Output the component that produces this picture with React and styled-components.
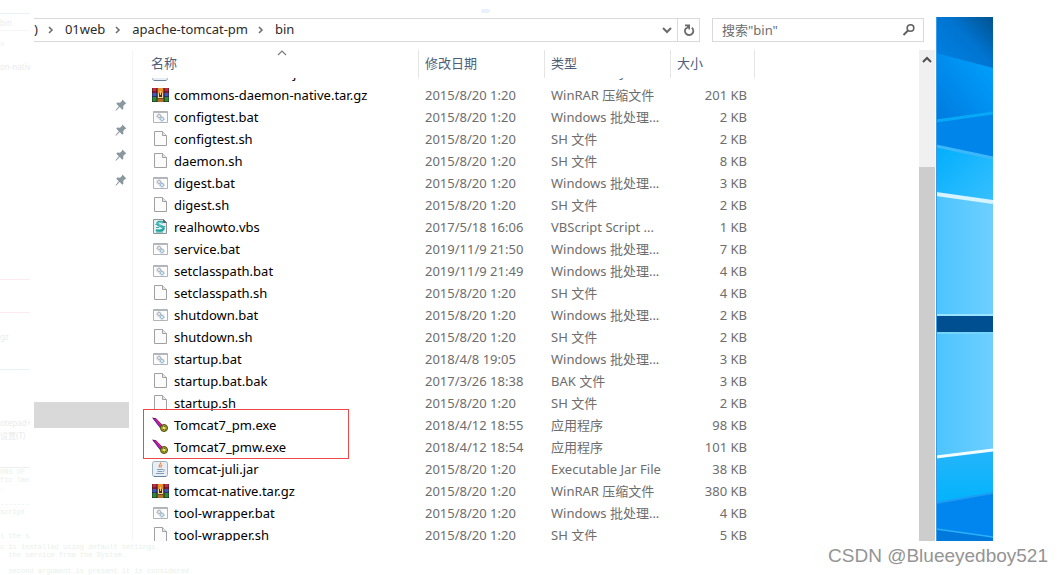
import { useLayoutEffect, useRef } from 'react';
import styled, { createGlobalStyle } from 'styled-components';

const GlobalStyle = createGlobalStyle`
  * {
    box-sizing: border-box;
  }

  body {
    margin: 0;
    background-color: #fff;
    font-family: 'Noto Sans', 'Noto Sans CJK SC', sans-serif;
    font-size: 13px;
  }
`;

const Page = styled.div`
  display: flex;
  flex-direction: column;
  height: 100vh;
  overflow: hidden;
`;

const Main = styled.div`
  display: flex;
  flex: 1;
  min-height: 0;
`;

const Ghost = styled.div`
  width: 34px;
  padding-right: 4px;
  flex-shrink: 0;
  overflow: hidden;
`;

const GhostLine = styled.div`
  height: ${(props) => props.$height}px;
  line-height: ${(props) => props.$height}px;
  border-bottom: 1px solid ${(props) => props.$rule || 'transparent'};
  color: #ebebeb;
  font-size: 8px;
  white-space: pre;
`;

const CodeLine = styled.div`
  height: 8px;
  line-height: 8px;
  font-family: 'Liberation Mono', monospace;
  font-size: 7px;
  color: #e9f0e9;
  white-space: pre;
`;

const Shot = styled.div`
  display: flex;
  flex-direction: column;
  flex: 1;
  min-width: 0;
  margin-right: 70px;
`;

const TopStrip = styled.div`
  display: flex;
  height: 17px;
  flex-shrink: 0;
  padding: 9px 0 0 447px;
`;

const Blob = styled.div`
  width: 9px;
  height: 4px;
  border-radius: 2px;
  background-color: #e9f1ff;
`;

const Screen = styled.div`
  display: flex;
  flex: 1;
  min-height: 0;
`;

const Explorer = styled.div`
  display: flex;
  flex-direction: column;
  flex: 1;
  min-width: 0;
`;

const Toolbar = styled.div`
  display: flex;
  gap: 12px;
  height: 33px;
  flex-shrink: 0;
  padding: 1px 12px 8px 0;
`;

const AddressBar = styled.nav`
  display: flex;
  align-items: center;
  flex: 1;
  min-width: 0;
  border: 1px solid #d9d9d9;
  border-left: none;
`;

const Crumbs = styled.div`
  display: flex;
  align-items: center;
  gap: 10px;
  flex: 1;
  min-width: 0;
  overflow: hidden;
  white-space: nowrap;
`;

const Crumb = styled.a`
  padding-bottom: 2px;
  color: #2b2b2b;
  text-decoration: none;
`;

const BarButton = styled.button`
  display: flex;
  align-items: center;
  justify-content: center;
  width: ${(props) => props.$width}px;
  height: 22px;
  padding: 0;
  border: none;
  border-left: 1px solid ${(props) => (props.$divided ? '#d9d9d9' : 'transparent')};
  background: none;
`;

const SearchBox = styled.label`
  display: flex;
  align-items: center;
  width: 212px;
  padding: 0 7px 0 9px;
  border: 1px solid #d9d9d9;
`;

const SearchInput = styled.input`
  flex: 1;
  min-width: 0;
  height: 20px;
  padding: 0;
  border: none;
  outline: none;
  background: none;
  font: inherit;

  &::placeholder {
    color: #6d6d6d;
    opacity: 1;
  }
`;

const Body = styled.div`
  display: flex;
  flex: 1;
  min-height: 0;
`;

const NavPane = styled.div`
  width: 99px;
  flex-shrink: 0;
  padding: 42px 3px 0 0;
  border-right: 1px solid #f5f5f5;
`;

const PinnedItem = styled.div`
  display: flex;
  align-items: center;
  justify-content: flex-end;
  height: 25px;
  padding-right: 2px;
`;

const SelectedItem = styled.div`
  height: 26px;
  margin-top: 210px;
  background-color: #d9d9d9;
`;

const FileList = styled.div`
  flex: 1;
  min-width: 0;
  padding-left: 12px;
  overflow: hidden;
`;

const Table = styled.table`
  width: 100%;
  table-layout: fixed;
  border-collapse: separate;
  border-spacing: 0;
`;

const HeadCell = styled.th`
  position: sticky;
  top: 0;
  z-index: 1;
  width: ${(props) => (props.$width ? `${props.$width}px` : 'auto')};
  height: 28px;
  padding: 0 6px 3px;
  border-right: 1px solid ${(props) => (props.$width ? '#e5e5e5' : 'transparent')};
  background-color: #fff;
  color: #4c607a;
  font-weight: 400;
  text-align: left;
`;

const SortArrow = styled.svg`
  position: absolute;
  top: 0;
  left: 50%;
  margin-left: -5px;
`;

const Cell = styled.td`
  position: relative;
  height: 22px;
  padding: 0 8px 0 6px;
  line-height: 22px;
  color: #6d6d6d;
  text-align: ${(props) => props.$align || 'left'};
  white-space: nowrap;
`;

const FileName = styled.div`
  display: flex;
  align-items: center;
  gap: 5px;
  padding-left: 1px;
  color: #000;

  svg {
    flex-shrink: 0;
  }
`;

const Highlight = styled.div`
  position: absolute;
  top: -5px;
  left: -2px;
  z-index: 1;
  width: 206px;
  height: 50px;
  border: 1px solid #f04848;
`;

const Scrollbar = styled.div`
  display: flex;
  flex-direction: column;
  width: 17px;
  flex-shrink: 0;
  padding-right: 1px;
`;

const ScrollButton = styled.button`
  display: flex;
  justify-content: center;
  height: 117px;
  padding: 6px 0 0;
  border: none;
  background-color: #f0f0f0;
`;

const ScrollThumb = styled.div`
  flex: 1;
  background-color: #cdcdcd;
`;

const Wallpaper = styled.div`
  width: 57px;
  flex-shrink: 0;

  svg {
    display: block;
    width: 100%;
    height: 100%;
  }
`;

const Footer = styled.div`
  display: flex;
  justify-content: space-between;
  height: 34px;
  flex-shrink: 0;
  padding: 2px 15px 0 0;
`;

const FooterCode = styled.div`
  display: flex;
  flex-direction: column;
`;

const Watermark = styled.div`
  font-family: 'Liberation Sans', sans-serif;
  font-size: 19px;
  line-height: 26px;
  color: #949494;
  white-space: nowrap;
`;

const Stroke = ({ d, width = 10, height = 10, color = '#6b6b6b', weight = 2 }) => (
  <svg width={width} height={height} viewBox={`0 0 ${width} ${height}`} fill="none">
    <path d={d} stroke={color} strokeWidth={weight} />
  </svg>
);

const CrumbArrow = () => <Stroke d="M1 2l3 3-3 3" width={7} color="#707070" weight={1.6} />;

const PinIcon = () => (
  <svg width="12" height="12" viewBox="0 0 12 12" fill="#8b979f">
    <path d="M7.4.6l4 4-1.3.5-1.9 1.9.2 2.7-1.2 1-2.5-2.6L1 11.7l-.6-.4 3.4-4.1-2.5-2.4 1-1.2 2.7.2 1.9-1.9z" />
  </svg>
);

const RarIcon = () => (
  <svg width="17" height="16" viewBox="0 0 17 16">
    <path fill="#c02c44" d="M0 1h17v4H0z" />
    <path fill="#8c1830" d="M0 4h17v2H0z" />
    <path fill="#4058c4" d="M0 6h17v3H0z" />
    <path fill="#283480" d="M0 9h17v1H0z" />
    <path fill="#2e8a3a" d="M0 10h17v4H0z" />
    <path fill="#1c5c28" d="M0 14h17v1H0z" />
    <path fill="#1a1208" opacity=".4" d="M0 1h1v14H0zM16 1h1v14h-1zM4 1h1v14H4zM12 1h1v14h-1z" />
    <path fill="#7c4420" d="M5 1h7v14H5z" />
    <path fill="#e8922c" d="M6 1h5v5H6z" />
    <path fill="#4c2c18" d="M6 6h5v5H6z" />
    <path fill="#f0d8a0" d="M6 6h1v5H6zM10 6h1v5h-1zM7 10h3v1H7z" />
    <path fill="#f8c878" d="M8 4h1v4H8z" />
    <path fill="#b4702c" d="M6 12h5v3H6z" />
  </svg>
);

const BatIcon = () => (
  <svg width="17" height="16" viewBox="0 0 17 16">
    <path fill="#fcfcfc" stroke="#b0b4b8" d="M1.5 2.5h14v11h-14z" />
    <path fill="#b4b8bc" d="M2 3h13v1H2z" />
    <g fill="none">
      <circle cx="7" cy="7" r="1.5" stroke="#a8b0b8" strokeWidth="1" />
      <circle cx="7" cy="7" r="2.4" stroke="#a8b0b8" strokeWidth=".8" strokeDasharray="1 .9" />
      <circle cx="10" cy="10" r="1.5" stroke="#94b4cc" strokeWidth="1" />
      <circle cx="10" cy="10" r="2.4" stroke="#94b4cc" strokeWidth=".8" strokeDasharray="1 .9" />
    </g>
  </svg>
);

const PageIcon = () => (
  <svg width="17" height="16" viewBox="0 0 17 16">
    <path fill="#fbfbfb" stroke="#a0a0a0" d="M2.5.5h8l4 4v10h-12z" />
    <path fill="#e8e8e8" stroke="#a0a0a0" d="M10.5.5v4h4" />
  </svg>
);

const VbsIcon = () => (
  <svg width="17" height="16" viewBox="0 0 17 16">
    <path fill="#e9eeee" stroke="#8c9494" d="M1.5.5h10l3 3v11h-13z" />
    <path fill="#5a6464" d="M11 0l4 4h-4z" />
    <path
      fill="none"
      stroke="#1fa4a4"
      strokeWidth="2.4"
      d="M11.5 3.5c-2-1-6-1-6 1.2 0 2.3 6 2 6 4.6 0 2.7-5 2.7-7.5 1.7"
    />
    <path fill="none" stroke="#8fe0e0" strokeWidth=".8" d="M10.5 3.5c-3-.6-5 0-4.8 1.3.5 1.700 5.300 2 5.300 4" />
    <path fill="none" stroke="#3aa8a8" d="M3.5 5.5h3M9 7.5h4M4 8.5h3M4 13h7" />
  </svg>
);

const ExeIcon = () => (
  <svg width="17" height="16" viewBox="0 0 17 16">
    <path fill="#5c1060" d="M0 .5l4 .7 7 7.300-3 2.500z" />
    <path fill="#f0207c" d="M2.200 1.500l2 .5 5.500 6-1.200 1z" />
    <path fill="#8828e0" d="M1 1.500l1.500.8L8.500 9l-.8.900z" />
    <circle cx="12" cy="11" r="3.500" fill="#a8a428" stroke="#4c4a14" />
    <path fill="none" stroke="#3c3a10" d="M10.500 9.500l3 3M13 9l-2 4" />
    <circle cx="12" cy="11" r="1.300" fill="#e8e478" />
  </svg>
);

const JarIcon = () => (
  <svg width="17" height="16" viewBox="0 0 17 16">
    <rect x=".5" y=".5" width="15" height="15" rx="2" fill="#e8eef3" stroke="#9cb0c0" />
    <path fill="#64829c" d="M2 15h12v1H2z" />
    <path fill="none" stroke="#e88848" strokeWidth="1.2" d="M8.5 1.5c1 2-2.6 2.6-1 5M10.3 4c-1.5.8-1.8 1.5-1 2.8" />
    <path fill="none" stroke="#7c9cb8" d="M5 8.5h6M5.5 10.5h5M4 12.5h8M11.5 8.5c1.5 0 1 1.8-.5 2" />
  </svg>
);

const icons = {
  rar: RarIcon,
  bat: BatIcon,
  vbs: VbsIcon,
  exe: ExeIcon,
  jar: JarIcon,
};

const types = {
  rar: 'WinRAR 压缩文件',
  bat: 'Windows 批处理...',
  sh: 'SH 文件',
  vbs: 'VBScript Script ...',
  bak: 'BAK 文件',
  exe: '应用程序',
  jar: 'Executable Jar File',
};

const files = [
  { name: 'commons-daemon.jar', date: '2015/8/20 1:20', kind: 'jar', size: 24 },
  { name: 'commons-daemon-native.tar.gz', date: '2015/8/20 1:20', kind: 'rar', size: 201 },
  { name: 'configtest.bat', date: '2015/8/20 1:20', kind: 'bat', size: 2 },
  { name: 'configtest.sh', date: '2015/8/20 1:20', kind: 'sh', size: 2 },
  { name: 'daemon.sh', date: '2015/8/20 1:20', kind: 'sh', size: 8 },
  { name: 'digest.bat', date: '2015/8/20 1:20', kind: 'bat', size: 3 },
  { name: 'digest.sh', date: '2015/8/20 1:20', kind: 'sh', size: 2 },
  { name: 'realhowto.vbs', date: '2017/5/18 16:06', kind: 'vbs', size: 1 },
  { name: 'service.bat', date: '2019/11/9 21:50', kind: 'bat', size: 7 },
  { name: 'setclasspath.bat', date: '2019/11/9 21:49', kind: 'bat', size: 4 },
  { name: 'setclasspath.sh', date: '2015/8/20 1:20', kind: 'sh', size: 4 },
  { name: 'shutdown.bat', date: '2015/8/20 1:20', kind: 'bat', size: 2 },
  { name: 'shutdown.sh', date: '2015/8/20 1:20', kind: 'sh', size: 2 },
  { name: 'startup.bat', date: '2018/4/8 19:05', kind: 'bat', size: 3 },
  { name: 'startup.bat.bak', date: '2017/3/26 18:38', kind: 'bak', size: 3 },
  { name: 'startup.sh', date: '2015/8/20 1:20', kind: 'sh', size: 2 },
  { name: 'Tomcat7_pm.exe', date: '2018/4/12 18:55', kind: 'exe', size: 98, marked: true },
  { name: 'Tomcat7_pmw.exe', date: '2018/4/12 18:54', kind: 'exe', size: 101 },
  { name: 'tomcat-juli.jar', date: '2015/8/20 1:20', kind: 'jar', size: 38 },
  { name: 'tomcat-native.tar.gz', date: '2015/8/20 1:20', kind: 'rar', size: 380 },
  { name: 'tool-wrapper.bat', date: '2015/8/20 1:20', kind: 'bat', size: 4 },
  { name: 'tool-wrapper.sh', date: '2015/8/20 1:20', kind: 'sh', size: 5 },
];

const ghostLines = [
  { height: 14, rule: '#e6f1f8' },
  { height: 17, text: 'bin', rule: '#f6f6f6' },
  { height: 27, text: '^' },
  { height: 18, text: 'on-nativ' },
  { height: 204, rule: '#fdeaee' },
  { height: 33, rule: '#fdeaee' },
  { height: 48, text: 'gz' },
  { height: 9, rule: '#e6f1f8' },
  { height: 47 },
  { height: 12, text: 'otepad+' },
  { height: 14, text: '设置(T)' },
  { height: 25, rule: '#eeeeee' },
];

const codeLines = ['ONS OF', 'fic lan', '.', '', '-------', 'script', '', '', 'l the s'];

const FileRow = ({ file }) => {
  const Icon = icons[file.kind] || PageIcon;

  return (
    <tr>
      <Cell>
        <FileName>
          <Icon />
          {file.name}
        </FileName>
        {file.marked && <Highlight />}
      </Cell>
      <Cell>{file.date}</Cell>
      <Cell>{types[file.kind]}</Cell>
      <Cell $align="right">{file.size} KB</Cell>
      <Cell />
    </tr>
  );
};

const DesktopArt = () => (
  <svg viewBox="0 0 57 524" preserveAspectRatio="none">
    <defs>
      <linearGradient id="sky" x1="0" y1="1" x2="1" y2="0">
        <stop offset="0" stopColor="#0084e8" />
        <stop offset=".6" stopColor="#0074d0" />
        <stop offset="1" stopColor="#00528f" />
      </linearGradient>
      <linearGradient id="beam" x1="0" y1="1" x2="1" y2="0">
        <stop offset="0" stopColor="#0078dc" />
        <stop offset="1" stopColor="#00a2ff" />
      </linearGradient>
      <linearGradient id="cyan" x1="0" y1="0" x2="1" y2="1">
        <stop offset="0" stopColor="#00aefc" />
        <stop offset="1" stopColor="#38c0ff" />
      </linearGradient>
      <linearGradient id="pane" x1="0" y1="0" x2="1" y2="0">
        <stop offset="0" stopColor="#4cc4ff" />
        <stop offset="1" stopColor="#6ecfff" />
      </linearGradient>
      <linearGradient id="low" x1="0" y1="0" x2="0" y2="1">
        <stop offset="0" stopColor="#26b4fb" />
        <stop offset="1" stopColor="#00b4fc" />
      </linearGradient>
    </defs>
    <path fill="url(#sky)" d="M0 0h57v60H0z" />
    <path fill="url(#beam)" d="M0 36l57 15v60H0z" />
    <path fill="#0086ea" d="M0 104l57-8v50H0z" />
    <path stroke="#08a8f8" strokeWidth="3" d="M0 104l57-8" />
    <path fill="url(#cyan)" d="M0 128l57 12v46H0z" />
    <path stroke="#3cb8fa" strokeWidth="3" d="M0 129l57 12" />
    <path fill="url(#pane)" d="M0 177l57 8v115H0z" />
    <path stroke="#d8f4ff" strokeWidth="4" d="M0 177l57 8" />
    <path fill="#9be4ff" d="M0 297h57v2H0z" />
    <path fill="#004f90" d="M0 299h57v16H0z" />
    <path fill="url(#pane)" d="M0 315h57v118L0 440z" />
    <path fill="#74d4fa" d="M0 315h57v2H0z" />
    <path fill="url(#low)" d="M0 440l57-7v46L0 488z" />
    <path stroke="#f2fcff" strokeWidth="3" d="M0 440l57-7" />
    <path fill="#0086ee" d="M0 486l57-10v48H0z" />
    <path stroke="#1c9cf4" strokeWidth="2" d="M0 486l57-10" />
    <path fill="#0078dc" d="M0 512l57 8v4H0z" />
    <path stroke="#2cb0f8" strokeWidth="1.5" d="M0 512l57 8" />
    <path fill="#3c9ce8" d="M0 0h1v524H0z" />
  </svg>
);

const App = () => {
  const listRef = useRef(null);

  // the list is scrolled so the first row is mostly hidden under the header
  useLayoutEffect(() => {
    listRef.current.scrollTop = 16;
  }, []);

  return (
    <Page>
      <GlobalStyle />
      <Main>
        <Ghost aria-hidden="true">
          {ghostLines.map((line, index) => (
            <GhostLine key={index} $height={line.height} $rule={line.rule}>
              {line.text}
            </GhostLine>
          ))}
          {codeLines.map((line, index) => (
            <CodeLine key={index}>{line}</CodeLine>
          ))}
        </Ghost>
        <Shot>
          <TopStrip>
            <Blob />
          </TopStrip>
          <Screen>
            <Explorer>
              <Toolbar>
                <AddressBar>
                  <Crumbs>
                    <Crumb href="#drive">)</Crumb>
                    <CrumbArrow />
                    <Crumb href="#01web">01web</Crumb>
                    <CrumbArrow />
                    <Crumb href="#apache-tomcat-pm">apache-tomcat-pm</Crumb>
                    <CrumbArrow />
                    <Crumb href="#bin">bin</Crumb>
                  </Crumbs>
                  <BarButton $width={22} aria-label="History">
                    <Stroke d="M1 3l4 4 4-4" />
                  </BarButton>
                  <BarButton $width={22} $divided aria-label="Refresh">
                    <svg width="12" height="13" viewBox="0 0 12 13" fill="none" stroke="#6b6b6b">
                      <path strokeWidth="1.8" d="M8.8 3.6a4.2 4.2 0 1 1-5.8.4" />
                      <path strokeWidth="1.6" d="M2 1.4h4.2v4.2M6 1.6L3 5" />
                    </svg>
                  </BarButton>
                </AddressBar>
                <SearchBox>
                  <SearchInput type="text" placeholder={'搜索"bin"'} aria-label="搜索" />
                  <svg width="14" height="14" viewBox="0 0 14 14" fill="none" stroke="#606060">
                    <circle cx="8.5" cy="5" r="3.3" strokeWidth="1.6" />
                    <path strokeWidth="2" d="M6 7.5L1.5 12" />
                  </svg>
                </SearchBox>
              </Toolbar>
              <Body>
                <NavPane>
                  {[1, 2, 3, 4].map((item) => (
                    <PinnedItem key={item}>
                      <PinIcon />
                    </PinnedItem>
                  ))}
                  <SelectedItem />
                </NavPane>
                <FileList ref={listRef}>
                  <Table>
                    <thead>
                      <tr>
                        <HeadCell $width={274}>
                          <SortArrow width="10" height="6" viewBox="0 0 10 6" fill="none">
                            <path d="M1 5l4-4 4 4" stroke="#7a7a7a" strokeWidth="1.2" />
                          </SortArrow>
                          名称
                        </HeadCell>
                        <HeadCell $width={126}>修改日期</HeadCell>
                        <HeadCell $width={126}>类型</HeadCell>
                        <HeadCell $width={84}>大小</HeadCell>
                        <HeadCell />
                      </tr>
                    </thead>
                    <tbody>
                      {files.map((file) => (
                        <FileRow key={file.name} file={file} />
                      ))}
                    </tbody>
                  </Table>
                </FileList>
                <Scrollbar>
                  <ScrollButton aria-label="Scroll up">
                    <Stroke d="M1 6l4-4 4 4" height={8} color="#505050" />
                  </ScrollButton>
                  <ScrollThumb />
                </Scrollbar>
              </Body>
            </Explorer>
            <Wallpaper>
              <DesktopArt />
            </Wallpaper>
          </Screen>
        </Shot>
      </Main>
      <Footer>
        <FooterCode aria-hidden="true">
          <CodeLine>c is installed using default settings.</CodeLine>
          <CodeLine>  the service from the System.</CodeLine>
          <CodeLine> </CodeLine>
          <CodeLine>  second argument is present it is considered</CodeLine>
        </FooterCode>
        <Watermark>CSDN @Blueeyedboy521</Watermark>
      </Footer>
    </Page>
  );
};

export default App;
